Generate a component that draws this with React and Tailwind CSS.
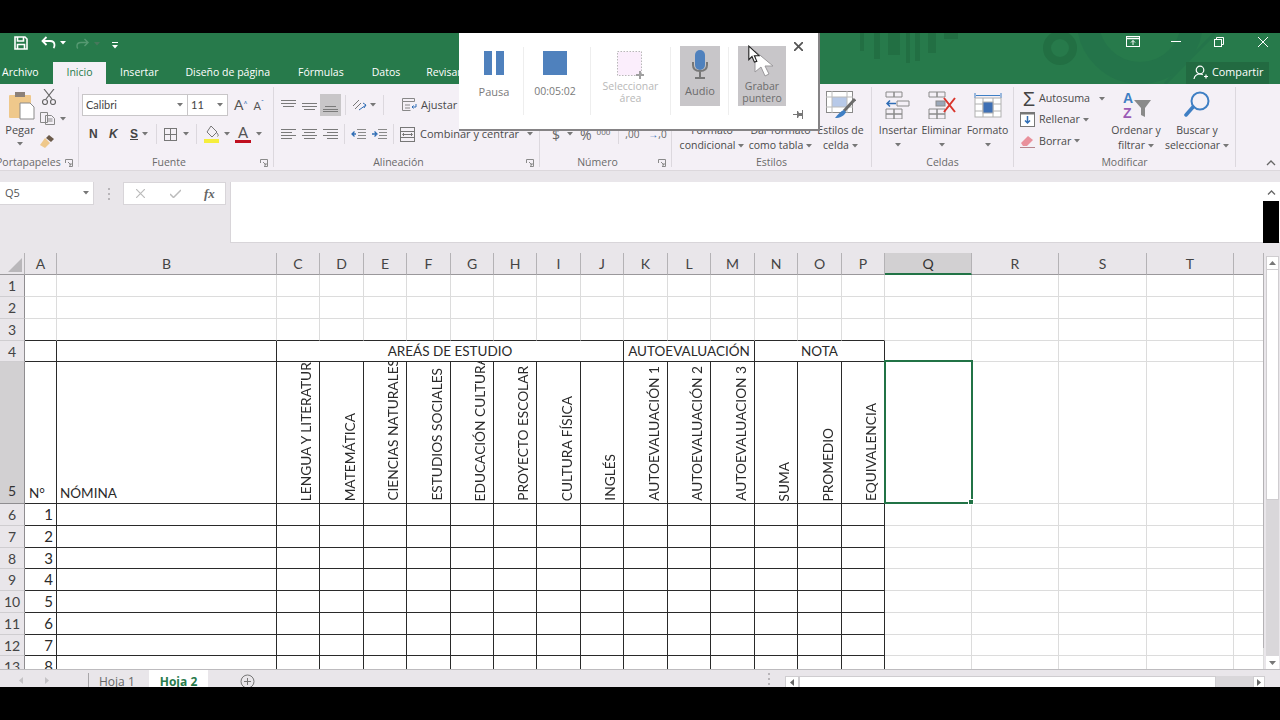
import React from 'react';

const UI = "font-['Open_Sans','Noto_Sans',sans-serif]";
const CELL = "font-['Lato','Liberation_Sans',sans-serif]";

const COLS = ['A', 'B', 'C', 'D', 'E', 'F', 'G', 'H', 'I', 'J', 'K', 'L', 'M', 'N', 'O', 'P', 'Q', 'R', 'S', 'T', ''];
const ROW_COUNT = 13;

const VERTICAL = {
  C: 'LENGUA Y LITERATURA',
  D: 'MATEMÁTICA',
  E: 'CIENCIAS NATURALES',
  F: 'ESTUDIOS SOCIALES',
  G: 'EDUCACIÓN CULTURAL',
  H: 'PROYECTO ESCOLAR',
  I: 'CULTURA FÍSICA',
  J: 'INGLÉS',
  K: 'AUTOEVALUACIÓN 1',
  L: 'AUTOEVALUACIÓN 2',
  M: 'AUTOEVALUACION 3',
  N: 'SUMA',
  O: 'PROMEDIO',
  P: 'EQUIVALENCIA',
};

function Caret({ className = '' }) {
  return (
    <svg width="6" height="4" viewBox="0 0 6 4" className={`shrink-0 ${className}`}>
      <path d="M0 0h6L3 3.5z" fill="#777" />
    </svg>
  );
}

function Launcher() {
  return (
    <svg width="8" height="8" viewBox="0 0 8 8" fill="none" stroke="#8a8a8a" strokeWidth="1">
      <path d="M.5 4V.5H7.5V7.5H4M3 3l3 3M6 4v2H4" />
    </svg>
  );
}

function AlignIcon({ lines }) {
  return (
    <svg width="15" height="13" viewBox="0 0 15 13" stroke="#7a7a7a" strokeWidth="1" className="shrink-0">
      {lines.map(([a, b, y]) => <path key={y} d={`M${a} ${y}.5H${b}`} />)}
    </svg>
  );
}

function IndentIcon({ right }) {
  return (
    <svg width="15" height="12" viewBox="0 0 15 12" fill="none" className="shrink-0">
      <path d="M6 1.5h9M7 4.5h8M7 7.5h8M6 10.5h9" stroke="#8a8a8a" />
      <path d={right ? 'M0 6h4M2.5 3.5 5 6 2.5 8.5' : 'M5 6H1M3.5 3.5 1 6l2.5 2.5'} stroke="#2f6db5" strokeWidth="1.3" />
    </svg>
  );
}

function SmallBtn({ children, className = '' }) {
  return <div className={`flex items-center justify-center shrink-0 ${className}`}>{children}</div>;
}

function Sep({ className = '' }) {
  return <div className={`w-px shrink-0 bg-[#dcd8de] ${className}`} />;
}

function Group({ className, label, labelClass = 'justify-center', launcher, children }) {
  return (
    <div className={`relative flex flex-col shrink-0 ${className}`}>
      <div className="flex-1 min-h-0">{children}</div>
      <div className={`flex h-[14px] items-center text-[10.5px] text-[#6a6a6a] whitespace-nowrap ${labelClass}`}>{label}</div>
      {launcher && <div className="absolute bottom-[3px] right-[5px]"><Launcher /></div>}
    </div>
  );
}

function BigLabel({ lines, caret }) {
  return (
    <div className="flex flex-col items-center text-[10.5px] leading-[15px] text-[#4a4a4a] whitespace-nowrap">
      {lines.map((l, i) => (
        <div key={l} className="flex items-center gap-[3px]">
          {l}
          {caret && i === lines.length - 1 && <Caret />}
        </div>
      ))}
    </div>
  );
}

function TitleBar() {
  return (
    <div className="relative h-[51px] bg-[#277a4b] text-white shrink-0 overflow-hidden">
      {/* background pattern of the green title bar */}
      <svg aria-hidden="true" className="absolute left-[820px] top-0" width="400" height="51" viewBox="0 0 400 51" fill="none">
        <g fill="#226f43">
          <rect x="40" y="0" width="4" height="18" /><rect x="54" y="0" width="6" height="26" />
          <rect x="68" y="0" width="12" height="22" /><rect x="86" y="0" width="4" height="30" />
          <rect x="95" y="0" width="5" height="28" /><rect x="108" y="0" width="8" height="20" />
          <rect x="124" y="0" width="14" height="6" />
        </g>
        <circle cx="240" cy="15" r="13" stroke="#226f43" strokeWidth="8" />
        <circle cx="320" cy="-12" r="52" stroke="#24744a" strokeWidth="22" />
        <path d="M345 51 395 0" stroke="#24744a" strokeWidth="3" />
      </svg>

      <div className="relative flex h-[29px] items-start">
        <svg className="ml-[14px] mt-[3px]" width="14" height="14" viewBox="0 0 14 14" fill="none" stroke="#fff" strokeWidth="1.6">
          <path d="M1 1h10l2 2v10H1z" /><path d="M3.5 1v4h6V1M3.5 13V8.5h7V13" />
        </svg>
        <svg className="ml-[13px] mt-[3px]" width="15" height="13" viewBox="0 0 15 13" fill="none" stroke="#fff" strokeWidth="1.8">
          <path d="M5.5 1 1.5 5l4 4M2 5h7c3 0 4.5 1.6 4.5 4 0 1.5-.5 2.5-1 3" />
        </svg>
        <Caret className="ml-[4px] mt-[8px] brightness-[3]" />
        <svg className="ml-[10px] mt-[5px] opacity-40" width="13" height="11" viewBox="0 0 13 11" fill="none" stroke="#9cc9ad" strokeWidth="1.4">
          <path d="M8.5 1 12 4.5 8.500 8M12 4.500H5C2.500 4.500 1 6 1 8c0 1 .3 2 .8 2.500" />
        </svg>
        <Caret className="ml-[5px] mt-[9px] opacity-40" />
        <svg className="ml-[12px] mt-[9px]" width="6" height="7" viewBox="0 0 6 7" fill="#fff"><rect y="0" width="6" height="1" /><path d="M0 3h6L3 6.500z" /></svg>

        <div className="ml-auto flex items-center mt-[3px]">
          <svg width="14" height="11" viewBox="0 0 14 11" fill="none" stroke="#fff"><rect x=".5" y=".5" width="13" height="10" /><path d="M.5 2.500h13" strokeWidth="1.500" /><path d="M7 9V4.500M5 6.500l2-2 2 2" /></svg>
          <div className="ml-[31px] h-px w-[10px] bg-white" />
          <svg className="ml-[33px]" width="10" height="10" viewBox="0 0 10 10" fill="none" stroke="#fff"><rect x=".5" y="2.500" width="7" height="7" /><path d="M2.500 2.500v-2h7v7h-2" /></svg>
          <svg className="ml-[34px] mr-[12px]" width="10" height="10" viewBox="0 0 10 10" stroke="#fff"><path d="M0 0l10 10M10 0 0 10" /></svg>
        </div>
      </div>

      <div className={`relative flex h-[22px] items-center text-[10.5px] text-white whitespace-nowrap ${UI}`}>
        <span className="ml-[2px] w-[51px]">Archivo</span>
        <span className="flex h-full w-[53px] items-center justify-center bg-[#f4f0f6] text-[#277a4b]">Inicio</span>
        <span className="ml-[14px]">Insertar</span>
        <span className="ml-[27px]">Diseño de página</span>
        <span className="ml-[28px]">Fórmulas</span>
        <span className="ml-[28px]">Datos</span>
        <span className="ml-[26px]">Revisar</span>
        <div className="ml-auto mr-[11px] flex h-full w-[83px] items-center bg-[#226a41] pb-[1px] pl-[7px]">
          <svg width="15" height="15" viewBox="0 0 15 15" fill="none" stroke="#fff" strokeWidth="1.200">
            <circle cx="7" cy="5" r="3.800" /><path d="M1 14c.5-3 2.500-5 6-5 1 0 2 .2 2.800.6M11 11.500h4M13 9.500v4" />
          </svg>
          <span className="ml-[4px] text-[10.8px]">Compartir</span>
        </div>
      </div>
    </div>
  );
}

function Ribbon() {
  return (
    <div className={`flex h-[87px] shrink-0 bg-[#f4f0f6] border-b border-[#dcd8dc] ${UI}`}>
      {/* Portapapeles */}
      <Group className="w-[78px]" label="Portapapeles" labelClass="justify-start -ml-[4px]" launcher>
        <div className="flex h-full">
          <div className="flex w-[40px] flex-col items-center pt-[8px]">
            <svg className="ml-[3px]" width="26" height="28" viewBox="0 0 26 28">
              <rect x="0" y="3" width="22" height="23" rx="1" fill="#efc88b" />
              <rect x="6" y="0" width="10" height="5" fill="#8b8078" />
              <path d="M11 11h10l4 4v12H11z" fill="#fff" stroke="#8a8a8a" />
            </svg>
            <span className="mt-[2px] text-[11px] leading-[15px] text-[#4a4a4a]">Pegar</span>
            <Caret className="mt-[5px]" />
          </div>
          <div className="flex flex-col pt-[5px]">
            <svg className="ml-[2px]" width="14" height="16" viewBox="0 0 14 16" fill="none" stroke="#666" strokeWidth="1.200">
              <path d="M2 0l8 10M12 0 4 10" /><circle cx="3" cy="13" r="2.500" /><circle cx="11" cy="13" r="2.500" />
            </svg>
            <div className="mt-[7px] flex items-center gap-[4px]">
              <svg width="16" height="13" viewBox="0 0 16 13" fill="none" stroke="#888"><path d="M.5.5h7v10h-7zM5.500 3.500h6l3 3v6h-9z" fill="#f4f0f6" /><path d="M7.500 7h5M7.500 9h5" /></svg>
              <Caret />
            </div>
            <svg className="mt-[10px]" width="15" height="13" viewBox="0 0 15 13">
              <path d="M9 0l5 4-3 3-5-4z" fill="#6b5a4a" /><path d="M5 3l5 5-5 5-5-3z" fill="#efc88b" />
            </svg>
          </div>
        </div>
      </Group>
      <Sep className="my-[3px]" />

      {/* Fuente */}
      <Group className="w-[194px]" label="Fuente" labelClass="justify-center pr-[14px]" launcher>
        <div className="flex h-[22px] items-center pl-[3px] mt-[10px]">
          <div className={`flex h-full w-[106px] items-center border border-[#c8c6c8] bg-white pl-[3px] pr-[4px] text-[11px] text-[#444] ${CELL}`}>
            <span className="flex-1">Calibri</span><Caret />
          </div>
          <div className={`flex h-full w-[40px] items-center border border-l-0 border-[#c8c6c8] bg-white pl-[3px] pr-[4px] text-[11px] text-[#444] ${CELL}`}>
            <span className="flex-1">11</span><Caret />
          </div>
          <span className={`ml-[6px] text-[14px] text-[#555] leading-none ${CELL}`}>A<sup className="text-[7px] text-[#2f6db5]">^</sup></span>
          <span className={`ml-[6px] text-[11px] text-[#555] leading-none ${CELL}`}>A<sup className="text-[7px] text-[#2f6db5]">ˇ</sup></span>
        </div>
        <div className="mt-[7px] flex h-[22px] items-center text-[13px] text-[#444]">
          <span className="ml-[10px] w-[8px] font-bold font-['Liberation_Sans',sans-serif] text-[12px]">N</span>
          <span className="ml-[12px] w-[8px] font-bold italic font-['Liberation_Sans',sans-serif] text-[12px]">K</span>
          <span className="ml-[13px] w-[8px] font-bold underline font-['Liberation_Sans',sans-serif] text-[12px]">S</span>
          <Caret className="ml-[4px]" />
          <Sep className="ml-[8px] h-[20px]" />
          <svg className="ml-[7px]" width="13" height="13" viewBox="0 0 13 13" fill="none" stroke="#777"><rect x=".5" y=".5" width="12" height="12" /><path d="M6.500 0v13M0 6.500h13" /></svg>
          <Caret className="ml-[6px]" />
          <Sep className="ml-[7px] h-[20px]" />
          <svg className="ml-[7px]" width="16" height="18" viewBox="0 0 16 18">
            <path d="M7 1l6 6-5 5-5-5z" fill="#f4f0f6" stroke="#777" /><path d="M13 8c1.500 2 1.500 3 .5 3.500" stroke="#777" fill="none" />
            <rect y="14" width="15" height="4" fill="#f5ee3d" />
          </svg>
          <Caret className="ml-[4px]" />
          <div className="ml-[5px] flex w-[16px] flex-col items-center">
            <span className={`text-[15px] leading-[14px] text-[#555] ${CELL}`}>A</span>
            <div className="mt-[1px] h-[3px] w-full bg-[#c00f1f]" />
          </div>
          <Caret className="ml-[5px]" />
        </div>
      </Group>
      <Sep className="my-[3px]" />

      {/* Alineación */}
      <Group className="w-[265px]" label="Alineación" labelClass="justify-center pr-[16px]" launcher>
        <div className="mt-[10px] flex h-[22px] items-center">
          <SmallBtn className="ml-[7px]"><AlignIcon lines={[[0, 15, 1], [0, 15, 4], [2, 13, 7]]} /></SmallBtn>
          <SmallBtn className="ml-[6px]"><AlignIcon lines={[[0, 15, 4], [0, 15, 7], [2, 13, 10]]} /></SmallBtn>
          <SmallBtn className="ml-[3px] h-[22px] w-[21px] bg-[#c8c6c8]"><AlignIcon lines={[[2, 13, 7], [0, 15, 10], [0, 15, 12]]} /></SmallBtn>
          <Sep className="ml-[4px] h-[20px]" />
          <svg className="ml-[6px]" width="15" height="14" viewBox="0 0 15 14" fill="none" stroke="#777"><path d="M1 8l6-6M3 11l6-6" /><path d="M7 12l7-5M11 5l3 2-2 3" stroke="#2f6db5" /></svg>
          <Caret className="ml-[3px]" />
          <Sep className="ml-[7px] h-[20px]" />
          <svg className="ml-[18px]" width="15" height="14" viewBox="0 0 15 14" fill="none" stroke="#888"><path d="M.5.5h12v3H.5zM.5 3.500v9h8M3 7h5M3 10h5" /><path d="M14 6v3h-4M11.500 7.500 10 9l1.500 1.500" stroke="#2f6db5" /></svg>
          <span className="ml-[4px] text-[11px] text-[#4a4a4a]">Ajustar texto</span>
        </div>
        <div className="mt-[7px] flex h-[22px] items-center">
          <SmallBtn className="ml-[7px]"><AlignIcon lines={[[0, 15, 1], [0, 11, 4], [0, 15, 7], [0, 11, 10]]} /></SmallBtn>
          <SmallBtn className="ml-[6px]"><AlignIcon lines={[[0, 15, 1], [2, 13, 4], [0, 15, 7], [2, 13, 10]]} /></SmallBtn>
          <SmallBtn className="ml-[6px]"><AlignIcon lines={[[0, 15, 1], [4, 15, 4], [0, 15, 7], [4, 15, 10]]} /></SmallBtn>
          <Sep className="ml-[6px] h-[20px]" />
          <div className="ml-[6px]"><IndentIcon /></div>
          <div className="ml-[6px]"><IndentIcon right /></div>
          <Sep className="ml-[6px] h-[20px]" />
          <svg className="ml-[6px]" width="15" height="15" viewBox="0 0 15 15" fill="none" stroke="#777"><rect x=".5" y=".5" width="14" height="14" /><path d="M0 4.500h15M0 10.500h15M3 7.500h9M4 6 2.500 7.500 4 9M11 6l1.500 1.500L11 9" /></svg>
          <span className="ml-[5px] text-[11px] text-[#4a4a4a] whitespace-nowrap">Combinar y centrar</span>
          <Caret className="ml-[8px]" />
        </div>
      </Group>
      <Sep className="my-[3px]" />

      {/* Número */}
      <Group className="w-[131px]" label="Número" labelClass="justify-center pr-[16px]" launcher>
        <div className="mt-[39px] flex h-[22px] items-center text-[#666]">
          <span className="ml-[12px] text-[14px]">$</span>
          <Caret className="ml-[7px]" />
          <span className="ml-[7px] text-[14px]">%</span>
          <span className="ml-[5px] text-[8px] -mt-[4px]">000</span>
          <Sep className="ml-[8px] h-[20px]" />
          <span className="ml-[6px] text-[10px]">,00</span>
          <span className="ml-[9px] text-[10px]"><span className="text-[#2f6db5]">→</span>,0</span>
        </div>
      </Group>
      <Sep className="my-[3px]" />

      {/* Estilos */}
      <Group className="w-[199px]" label="Estilos">
        <div className="flex h-full pt-[7px]">
          <div className="mt-[32px] ml-[5px] w-[70px]"><BigLabel lines={['Formato', 'condicional']} caret /></div>
          <div className="mt-[32px] ml-[-1px] w-[69px]"><BigLabel lines={['Dar formato', 'como tabla']} caret /></div>
          <div className="ml-[2px] flex w-[47px] flex-col items-center">
            <svg width="30" height="28" viewBox="0 0 30 28" fill="none">
              <rect x=".5" y=".5" width="26" height="21" fill="#fff" stroke="#8a8a8a" />
              <rect x="6" y="6" width="15" height="10" fill="#b7c9e8" />
              <path d="M0 6h27M0 16h27M6 0v22M21 0v22" stroke="#bbb" />
              <path d="M29 8 18 20" stroke="#6b6b6b" strokeWidth="3" />
              <path d="M18 19c-3 1-6 4-9 8 5 0 9-2 11-6z" fill="#3f7fc4" />
            </svg>
            <div className="mt-[4px]"><BigLabel lines={['Estilos de', 'celda']} caret /></div>
          </div>
        </div>
      </Group>
      <Sep className="my-[3px]" />

      {/* Celdas */}
      <Group className="w-[141px]" label="Celdas">
        <div className="flex h-full pl-[5px] pt-[7px]">
          {[
            ['Insertar', 'w-[42px]', (
              <svg key="i" width="26" height="28" viewBox="0 0 26 28" fill="none" stroke="#8a8a8a">
                <path d="M1 1h8v5H1zM9 1h8v5H9zM1 18h8v5H1zM9 18h8v5H9zM1 23h8v5H1zM9 23h8v5H9zM12 10h12v5H12z" fill="#f4f0f6" />
                <path d="M11 12.500H2M5 9.500l-3 3 3 3" stroke="#2f6db5" strokeWidth="1.500" />
              </svg>
            )],
            ['Eliminar', 'w-[45px]', (
              <svg key="e" width="28" height="28" viewBox="0 0 28 28" fill="none" stroke="#8a8a8a">
                <path d="M1 1h8v5H1zM9 1h8v5H9zM1 18h8v5H1zM9 18h8v5H9zM1 23h8v5H1zM9 23h8v5H9z" fill="#f4f0f6" />
                <rect x="8" y="10" width="9" height="5" fill="#9aa7b8" />
                <path d="M16 7l11 14M27 7 16 21" stroke="#d9352c" strokeWidth="2" />
              </svg>
            )],
            ['Formato', 'w-[47px]', (
              <svg key="f" width="28" height="28" viewBox="0 0 28 28" fill="none" stroke="#b0b0b0">
                <path d="M1 2v5M27 2v5M2 4.500h24" stroke="#3f7fc4" />
                <rect x="1" y="7" width="26" height="19" fill="#fff" />
                <path d="M9 7v19M19 7v19M1 13h26M1 20h26" />
                <rect x="9" y="11" width="10" height="11" fill="#3f70b5" />
              </svg>
            )],
          ].map(([label, w, icon]) => (
            <div key={label} className={`flex flex-col items-center ${w}`}>
              {icon}
              <div className="mt-[4px] text-[10.5px] leading-[15px] text-[#4a4a4a]">{label}</div>
              <Caret className="mt-[5px]" />
            </div>
          ))}
        </div>
      </Group>
      <Sep className="my-[3px]" />

      {/* Modificar */}
      <Group className="w-[221px]" label="Modificar">
        <div className="flex h-full">
          <div className="ml-[6px] w-[91px] pt-[4px] text-[10.7px] text-[#4a4a4a]">
            <div className="flex h-[21px] items-center">
              <span className="w-[18px] text-center text-[20px] leading-none text-[#444] font-['Liberation_Sans',sans-serif]">Σ</span>
              <span className="ml-[1px]">Autosuma</span>
              <Caret className="ml-[9px]" />
            </div>
            <div className="flex h-[21px] items-center">
              <svg width="15" height="15" viewBox="0 0 15 15" fill="none"><rect x=".5" y=".5" width="14" height="14" fill="#fff" stroke="#777" /><path d="M0 1.500h15" stroke="#777" strokeWidth="2" /><path d="M7.500 4v7M5 8.500l2.500 2.500L10 8.500" stroke="#2f6db5" strokeWidth="1.500" /></svg>
              <span className="ml-[4px]">Rellenar</span>
              <Caret className="ml-[3px]" />
            </div>
            <div className="flex h-[22px] items-center">
              <svg width="15" height="13" viewBox="0 0 15 13"><path d="M8 1l5 4-6 6H3L1 8z" fill="#e9909b" /><path d="M0 12.500h15" stroke="#b8858c" /></svg>
              <span className="ml-[4px]">Borrar</span>
              <Caret className="ml-[3px]" />
            </div>
          </div>
          <div className="flex w-[50px] flex-col items-center pt-[7px]">
            <svg width="29" height="28" viewBox="0 0 29 28">
              <text x="1" y="12" fontSize="14" fontWeight="700" fill="#3f7fc4" fontFamily="Liberation Sans">A</text>
              <text x="1" y="27" fontSize="14" fontWeight="700" fill="#9a5bb5" fontFamily="Liberation Sans">Z</text>
              <path d="M12 9h17l-6 8v9l-4-2v-7z" fill="#8a8a8a" />
            </svg>
            <div className="mt-[4px]"><BigLabel lines={['Ordenar y', 'filtrar']} caret /></div>
          </div>
          <div className="ml-[3px] flex w-[66px] flex-col items-center pt-[7px]">
            <svg width="26" height="28" viewBox="0 0 26 28" fill="none">
              <circle cx="16" cy="10" r="8.500" stroke="#3f7fc4" strokeWidth="2" />
              <path d="M9 16 2 24" stroke="#3f7fc4" strokeWidth="3.500" strokeLinecap="round" />
            </svg>
            <div className="mt-[4px]"><BigLabel lines={['Buscar y', 'seleccionar']} caret /></div>
          </div>
        </div>
      </Group>
      <Sep className="my-[3px]" />
      <div className="flex flex-1 items-end justify-end pb-[4px] pr-[4px]">
        <svg width="10" height="6" viewBox="0 0 10 6" fill="none" stroke="#666" strokeWidth="1.300"><path d="M1 5l4-4 4 4" /></svg>
      </div>
    </div>
  );
}

function FormulaBar() {
  return (
    <div className={`flex h-[82px] shrink-0 items-start bg-[#e9e6ea] pt-[11px] ${UI}`}>
      <div className="flex h-[23px] w-[94px] items-center border-r border-b border-[#d8d5d9] bg-white pl-[5px] pr-[4px] text-[11px] text-[#555]">
        <span className="flex-1">Q5</span><Caret />
      </div>
      <div className="ml-[14px] mt-[6px] flex h-[12px] w-[2px] flex-col justify-between">
        <i className="h-[2px] bg-[#b8b5b9]" /><i className="h-[2px] bg-[#b8b5b9]" /><i className="h-[2px] bg-[#b8b5b9]" />
      </div>
      <div className="ml-[13px] flex h-[23px] w-[103px] items-center border border-[#d8d5d9] bg-white">
        <svg className="ml-[12px]" width="9" height="9" viewBox="0 0 9 9" stroke="#bbb" strokeWidth="1.200"><path d="M0 0l9 9M9 0 0 9" /></svg>
        <svg className="ml-[25px]" width="11" height="9" viewBox="0 0 11 9" fill="none" stroke="#bbb" strokeWidth="1.500"><path d="M0 5l3.500 3.500L11 1" /></svg>
        <span className="ml-[23px] font-['Liberation_Serif',serif] text-[13px] italic font-bold leading-none text-[#666]">fx</span>
      </div>
      <div className="relative ml-[4px] h-[61px] flex-1 border-l border-b border-[#d8d5d9] bg-white">
        <svg className="absolute right-[4px] top-[8px]" width="9" height="5" viewBox="0 0 9 5" fill="none" stroke="#666" strokeWidth="1.300"><path d="M1 4.500l3.500-3.500L8 4.500" /></svg>
        <div className="absolute -bottom-px right-px h-[42px] w-[16px] bg-black" />
      </div>
    </div>
  );
}

function headCell(label) {
  if (label === 'Q') {
    return (
      <div key={label} className="flex items-center justify-center border-r border-[#b4b2b5] border-b-2 border-b-[#217346] bg-[#d2d0d2] text-[14px] text-[#333]">
        {label}
      </div>
    );
  }
  return (
    <div key={label || 'end'} className="flex items-center justify-center border-r border-b border-[#b4b2b5] border-b-[#9a989b] bg-[#e9e6ea] text-[14px] text-[#444]">
      {label}
    </div>
  );
}

function DataCell({ name, index, row }) {
  const inTable = index < 16;
  const lineBelow = inTable && row >= 3;
  const lineRight = inTable && row >= 4;
  let cls = 'relative min-w-0 overflow-hidden border-r border-b leading-none text-[#2a2a2a] ';
  cls += lineRight ? 'border-r-[#2a2a2a] ' : 'border-r-[#dcdcdc] ';
  cls += lineBelow ? 'border-b-[#2a2a2a] ' : 'border-b-[#dcdcdc] ';

  if (row === 5 && VERTICAL[name]) {
    return (
      <div className={`${cls} flex items-end justify-end pr-[6px] pb-[2px]`}>
        <span className="rotate-180 whitespace-nowrap text-[13.700px] leading-[15px] [writing-mode:vertical-rl]">{VERTICAL[name]}</span>
      </div>
    );
  }
  if (row === 5 && name === 'A') return <div className={`${cls} flex items-end pl-[4px] pb-[3px] text-[13.500px]`}>N°</div>;
  if (row === 5 && name === 'B') return <div className={`${cls} flex items-end pl-[3px] pb-[3px] text-[13.500px]`}>NÓMINA</div>;
  if (row >= 6 && name === 'A') {
    return <div className={`${cls} flex items-center justify-end pr-[3px] text-[15px]`}>{row - 5}</div>;
  }
  return <div className={cls} />;
}

const MERGED = 'flex items-center justify-center border-r border-b border-[#2a2a2a] text-[13.500px] text-[#2a2a2a]';

function Sheet() {
  const rowHeaders = Array.from({ length: ROW_COUNT }, (_, i) => i + 1);
  return (
    <div className="flex h-[416px] shrink-0 bg-[#e9e6ea]">
      <div className={`relative h-full w-[1264px] overflow-hidden bg-white ${CELL}`}>
        <div className="grid w-[1264px] grid-cols-[25px_32px_220px_43px_44px_43px_44px_43px_43px_44px_43px_44px_43px_44px_43px_44px_43px_87px_87px_88px_87px_30px] grid-rows-[22px_22px_22px_22px_21px_142px_22px_22px_21px_22px_22px_22px_21px_22px]">
          <div className="flex items-end justify-end border-r border-b border-[#b4b2b5] border-b-[#9a989b] bg-[#e9e6ea] pb-[2px] pr-[2px]">
            <svg width="14" height="14" viewBox="0 0 14 14"><path d="M14 0v14H0z" fill="#b9b7ba" /></svg>
          </div>
          {COLS.map(name => headCell(name))}

          {rowHeaders.map(row => (
            <React.Fragment key={row}>
              <div className={row === 5
                ? 'flex items-end justify-center border-r border-b border-[#8f8d90] bg-[#d2d0d2] pb-[2px] text-[14px] text-[#333]'
                : 'flex items-center justify-center border-r border-b border-r-[#8f8d90] border-b-[#cfcdd0] bg-[#e9e6ea] text-[14px] text-[#444]'}>
                {row}
              </div>
              {row === 4 ? (
                <>
                  <DataCell name="A" index={0} row={4} />
                  <DataCell name="B" index={1} row={4} />
                  <div className={`col-span-8 ${MERGED}`}>AREÁS DE ESTUDIO</div>
                  <div className={`col-span-3 ${MERGED}`}>AUTOEVALUACIÓN</div>
                  <div className={`col-span-3 ${MERGED}`}>NOTA</div>
                  {COLS.slice(16).map((name, i) => <DataCell key={name || 'end'} name={name} index={16 + i} row={4} />)}
                </>
              ) : (
                COLS.map((name, index) => <DataCell key={name || 'end'} name={name} index={index} row={row} />)
              )}
            </React.Fragment>
          ))}
        </div>
        {/* active cell Q5 */}
        <div className="pointer-events-none absolute left-[884px] top-[107px] h-[144px] w-[89px] border-2 border-[#217346]">
          <div className="absolute -bottom-[3px] -right-[3px] h-[6px] w-[6px] border border-white bg-[#217346]" />
        </div>
        <div className="pointer-events-none absolute inset-y-[21px] right-0 w-px bg-[#b4b2b5]" />
      </div>

      {/* vertical scrollbar */}
      <div className="ml-[2px] flex w-[13px] flex-col pt-[3px]">
        <div className="flex h-[14px] items-center justify-center border border-[#cfcdd0] bg-white">
          <svg width="7" height="4" viewBox="0 0 7 4"><path d="M0 4h7L3.500 0z" fill="#777" /></svg>
        </div>
        <div className="h-[230px] border border-t-0 border-[#cfcdd0] bg-white" />
        <div className="flex-1 bg-[#d9d7da]" />
        <div className="flex h-[13px] items-center justify-center bg-white">
          <svg width="7" height="4" viewBox="0 0 7 4"><path d="M0 0h7L3.500 4z" fill="#777" /></svg>
        </div>
      </div>
    </div>
  );
}

function SheetTabs() {
  return (
    <div className={`flex h-[18px] shrink-0 items-end overflow-hidden border-t border-[#bdbbbe] bg-[#e9e6ea] text-[12px] ${UI}`}>
      <svg className="mb-[3px] ml-[19px]" width="4" height="7" viewBox="0 0 4 7"><path d="M4 0v7L0 3.500z" fill="#c4c2c5" /></svg>
      <svg className="mb-[3px] ml-[22px]" width="4" height="7" viewBox="0 0 4 7"><path d="M0 0v7l4-3.500z" fill="#c4c2c5" /></svg>
      <Sep className="ml-[39px] h-[14px] !bg-[#a8a6a9]" />
      <span className="ml-[10px] flex h-[17px] w-[50px] items-center pt-[6px] text-[#666]">Hoja 1</span>
      <div className="flex h-[17px] w-[59px] items-center justify-center bg-white pt-[6px] font-bold text-[#277a4b]">Hoja 2</div>
      <svg className="-mb-[2px] ml-[32px]" width="15" height="15" viewBox="0 0 15 15" fill="none" stroke="#777"><circle cx="7.500" cy="7.500" r="6.500" /><path d="M7.500 4v7M4 7.500h7" /></svg>

      <div className="ml-[513px] mb-[2px] flex h-[12px] w-[2px] flex-col justify-between">
        <i className="h-[2px] bg-[#b8b5b9]" /><i className="h-[2px] bg-[#b8b5b9]" /><i className="h-[2px] bg-[#b8b5b9]" />
      </div>
      <div className="ml-[15px] flex h-[11px] w-[14px] items-center justify-center border border-b-0 border-[#cfcdd0] bg-white">
        <svg width="4" height="7" viewBox="0 0 4 7"><path d="M4 0v7L0 3.500z" fill="#666" /></svg>
      </div>
      <div className="h-[11px] w-[417px] border border-b-0 border-[#cfcdd0] bg-white" />
      <div className="h-[11px] w-[37px] bg-[#d9d7da]" />
      <div className="flex h-[11px] w-[12px] items-center justify-center border border-b-0 border-[#cfcdd0] bg-white">
        <svg width="4" height="7" viewBox="0 0 4 7"><path d="M0 0v7l4-3.500z" fill="#666" /></svg>
      </div>
    </div>
  );
}

function RecorderBar() {
  return (
    <div className={`absolute left-[459px] top-[33px] flex h-[98px] w-[361px] border-r-2 border-b-2 border-[#858385] bg-white text-[11px] text-[#7a7a7a] ${UI}`}>
      <div className="flex w-[64px] flex-col items-center pl-[6px] pt-[18px]">
        <div className="flex gap-[4px]"><div className="h-[24px] w-[8px] bg-[#4f81bd]" /><div className="h-[24px] w-[8px] bg-[#4f81bd]" /></div>
        <span className="mt-[9px]">Pausa</span>
      </div>
      <Sep className="my-[14px] !bg-[#eeeeee]" />
      <div className="flex w-[66px] flex-col items-center pr-[4px] pt-[18px]">
        <div className="h-[24px] w-[24px] bg-[#4f81bd]" />
        <span className="mt-[9px] text-[10.5px]">00:05:02</span>
      </div>
      <Sep className="my-[14px] !bg-[#eeeeee]" />
      <div className="flex w-[79px] flex-col items-center pt-[18px] text-[#b8b8b8]">
        <svg width="28" height="28" viewBox="0 0 28 28">
          <rect x=".5" y=".5" width="24" height="24" fill="#fbeefc" stroke="#b8b8b8" strokeDasharray="1.500 1.500" />
          <path d="M22 20h2v3h3v2h-3v3h-2v-3h-3v-2h3z" fill="#a0a0a0" />
        </svg>
        <div className="mt-[1px] text-center text-[10.5px] leading-[12px]">Seleccionar<br />área</div>
      </div>
      <Sep className="my-[14px] !bg-[#eeeeee]" />
      <div className="ml-[9px] mt-[13px] flex h-[60px] w-[40px] flex-col items-center bg-[#c8c6c9] pt-[4px]">
        <svg width="16" height="29" viewBox="0 0 16 29" fill="none">
          <rect x="3" y="0" width="10" height="20" rx="5" fill="#4f81bd" />
          <path d="M1 12v3c0 4 3 6 7 6s7-2 7-6v-3M8 21v6M3 28h10" stroke="#777" strokeWidth="2" />
        </svg>
        <span className="mt-[4px] text-[#6c6c6c]">Audio</span>
      </div>
      <Sep className="ml-[8px] my-[14px] !bg-[#eeeeee]" />
      <div className="ml-[9px] mt-[13px] flex h-[60px] w-[48px] flex-col items-center bg-[#c8c6c9] pt-[2px] text-[#6c6c6c]">
        <svg width="24" height="30" viewBox="0 0 24 30">
          <path d="M5 3v21l6-5 4 9 4-2-4-8h8z" fill="#fff" stroke="#9a989b" />
        </svg>
        <div className="mt-[2px] text-center text-[10.5px] leading-[12px]">Grabar<br />puntero</div>
      </div>
      <div className="flex w-[24px] flex-col items-center justify-between pt-[9px] pb-[10px]">
        <svg width="9" height="9" viewBox="0 0 9 9" stroke="#555" strokeWidth="1.800"><path d="M0 0l9 9M9 0 0 9" /></svg>
        <svg width="11" height="9" viewBox="0 0 11 9" fill="#777"><path d="M0 4h4V1h1l1 2h3V0h1v9H9V6H6L5 8H4V5H0z" /></svg>
      </div>
      {/* mouse pointer of the recording */}
      <svg className="absolute left-[289px] top-[12px]" width="12" height="19" viewBox="0 0 15 23">
        <path d="M1 1v17l4-4 3 7 3-1-3-7h6z" fill="#fff" stroke="#222" strokeWidth="1.400" />
      </svg>
    </div>
  );
}

export default function App() {
  return (
    <div className="relative flex h-[720px] w-[1280px] flex-col overflow-hidden bg-black">
      <div className="h-[33px] shrink-0 bg-black" />
      <TitleBar />
      <Ribbon />
      <FormulaBar />
      <Sheet />
      <SheetTabs />
      <RecorderBar />
    </div>
  );
}
